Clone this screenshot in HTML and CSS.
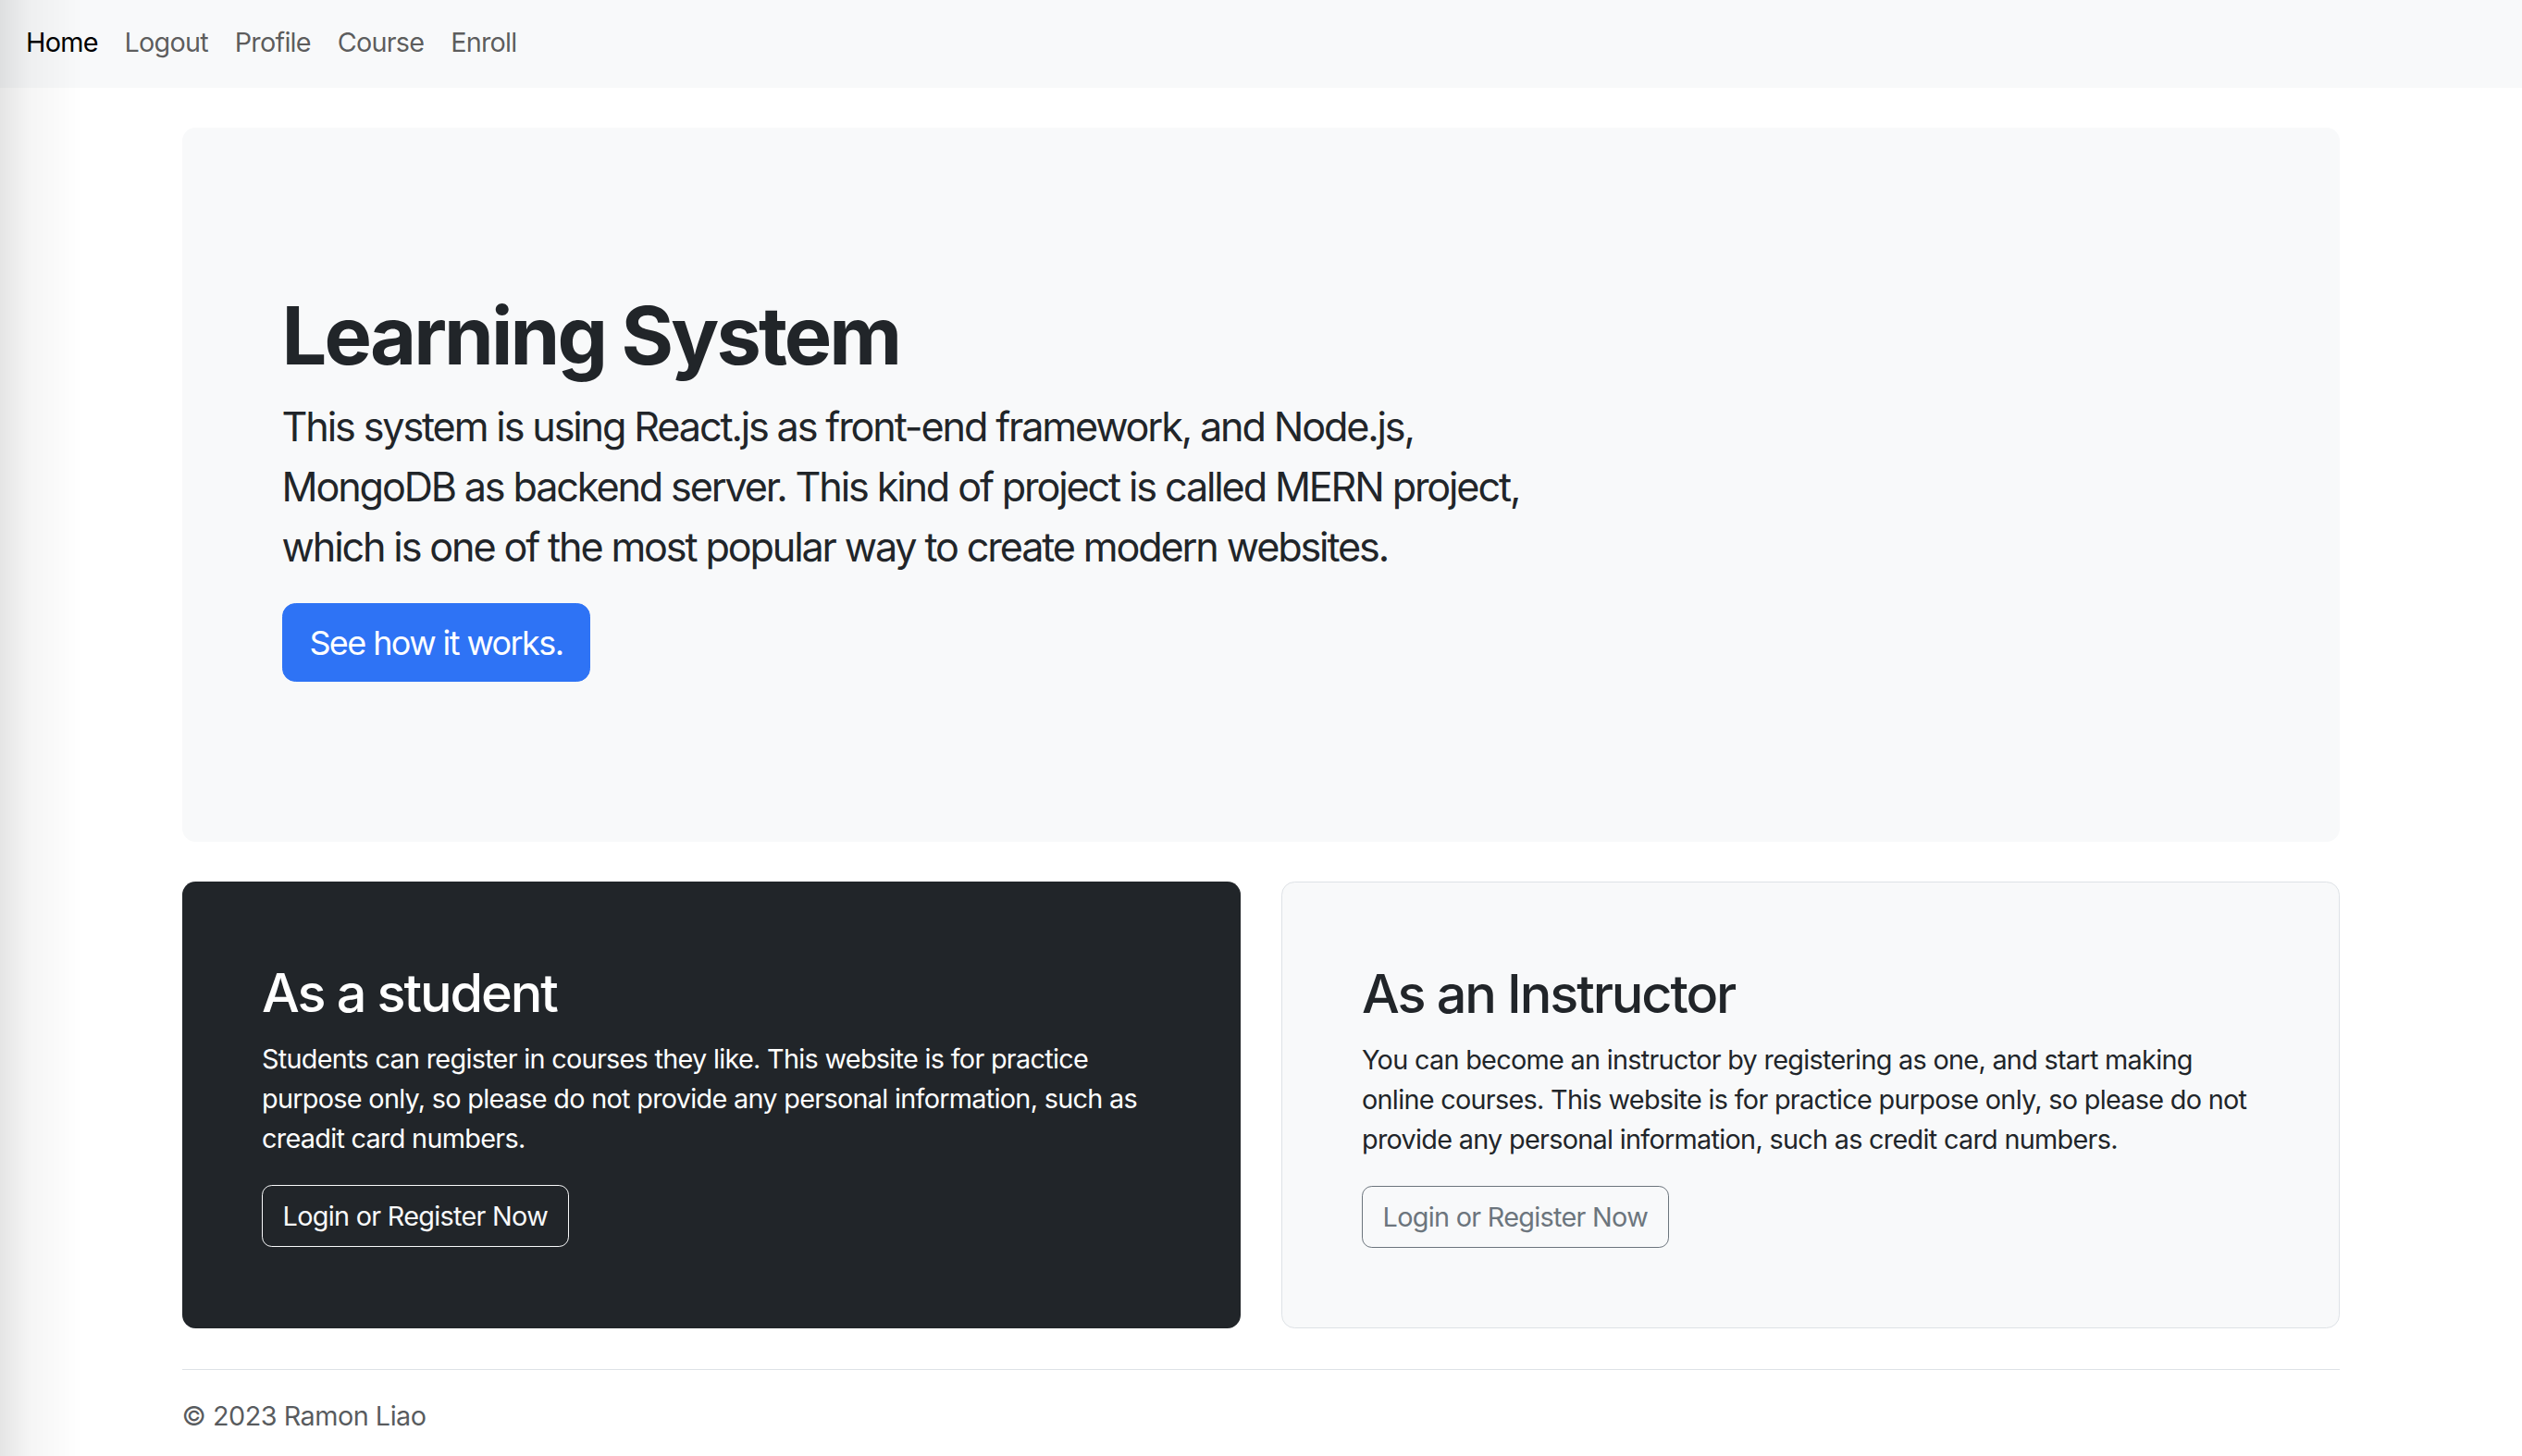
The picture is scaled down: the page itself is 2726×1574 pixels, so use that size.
FILE: index.html
```html
<!DOCTYPE html>
<html lang="en">
<head>
<meta charset="utf-8">
<title>Learning System</title>
<link rel="stylesheet" href="styles.css">
</head>
<body>
<div class="edge-shade"></div>
<nav class="topnav">
  <a class="nav-link active" href="#">Home</a>
  <a class="nav-link" href="#">Logout</a>
  <a class="nav-link" href="#">Profile</a>
  <a class="nav-link" href="#">Course</a>
  <a class="nav-link" href="#">Enroll</a>
</nav>
<main class="container">
  <section class="hero">
    <div class="hero-inner">
      <h1 class="hero-title">Learning System</h1>
      <p class="hero-text">This system is using React.js as front-end framework, and Node.js, MongoDB as backend server. This kind of project is called MERN project, which is one of the most popular way to create modern websites.</p>
      <button class="btn btn-primary-lg" type="button">See how it works.</button>
    </div>
  </section>
  <div class="cards">
    <div class="card card-dark">
      <h2 class="card-title">As a student</h2>
      <p class="card-text">Students can register in courses they like. This website is for practice purpose only, so please do not provide any personal information, such as creadit card numbers.</p>
      <button class="btn btn-outline-light" type="button">Login or Register Now</button>
    </div>
    <div class="card card-light">
      <h2 class="card-title">As an Instructor</h2>
      <p class="card-text">You can become an instructor by registering as one, and start making online courses. This website is for practice purpose only, so please do not provide any personal information, such as credit card numbers.</p>
      <button class="btn btn-outline-secondary" type="button">Login or Register Now</button>
    </div>
  </div>
  <footer class="footer">© 2023 Ramon Liao</footer>
</main>
</body>
</html>
```
FILE: styles.css
```css
* { box-sizing: border-box; }
html, body { margin: 0; padding: 0; }
body {
  font-family: Inter, "Noto Sans", "Liberation Sans", sans-serif;
  font-size: 28.8px;
  line-height: 1.5;
  color: #212529;
  background: #ffffff;
  overflow: hidden;
}
.edge-shade {
  position: fixed;
  left: 0;
  top: 0;
  bottom: 0;
  width: 90px;
  background: linear-gradient(to right, rgba(0,0,0,0.10), rgba(0,0,0,0.04) 35%, rgba(0,0,0,0) 100%);
  pointer-events: none;
  z-index: 10;
}
.topnav {
  height: 95px;
  background: #f8f9fa;
  display: flex;
  align-items: center;
  gap: 28.8px;
  padding: 0 0 4px 28px;
}
.nav-link {
  font-size: 28.8px;
  letter-spacing: -0.75px;
  color: rgba(0,0,0,0.65);
  text-decoration: none;
}
.nav-link.active { color: #000000; }
.container {
  max-width: 2376px;
  margin: 0 auto;
  padding: 43.2px 21.6px 0;
}
.hero {
  background: #f8f9fa;
  border-radius: 14.4px;
  padding: 86.4px;
  margin-bottom: 43.2px;
}
.hero-inner {
  padding: 86.4px 21.6px;
}
.hero-title {
  font-size: 86.4px;
  font-weight: 700;
  line-height: 1.2;
  letter-spacing: -2.9px;
  margin: 0 0 14.4px;
}
.hero-text {
  width: 66.6667%;
  font-size: 43.2px;
  line-height: 1.5;
  letter-spacing: -2.15px;
  margin: 0 0 28.8px;
}
.btn {
  font-family: inherit;
  display: inline-block;
  line-height: 1.5;
  cursor: pointer;
  background: transparent;
}
.btn-primary-lg {
  font-size: 36px;
  letter-spacing: -1.6px;
  padding: 14.4px 28.8px;
  border: 1.8px solid #2e73f5;
  border-radius: 14.4px;
  background: #2e73f5;
  color: #ffffff;
}
.cards {
  display: grid;
  grid-template-columns: 1fr 1fr;
  gap: 43.2px;
}
.card {
  padding: 86.4px;
  border-radius: 14.4px;
}
.card-dark {
  background: #212529;
  color: #ffffff;
}
.card-light {
  background: #f8f9fa;
  border: 1.8px solid #dee2e6;
}
.card-title {
  font-size: 57.6px;
  font-weight: 500;
  line-height: 1.2;
  letter-spacing: -2.1px;
  margin: 0 0 14.4px;
}
.card-text {
  font-size: 28.8px;
  line-height: 1.5;
  letter-spacing: -0.7px;
  margin: 0 0 28.8px;
}
.btn-outline-light,
.btn-outline-secondary {
  font-size: 28.8px;
  letter-spacing: -0.7px;
  padding: 10.8px 21.6px;
  border-radius: 10.8px;
}
.btn-outline-light {
  color: #f8f9fa;
  border: 1.8px solid #f8f9fa;
}
.btn-outline-secondary {
  color: #6c757d;
  border: 1.8px solid #6c757d;
}
.footer {
  margin-top: 43.2px;
  padding-top: 28.8px;
  border-top: 1.8px solid #dee2e6;
  color: rgba(33,37,41,0.75);
  font-size: 28.8px;
  letter-spacing: -0.5px;
}
```
